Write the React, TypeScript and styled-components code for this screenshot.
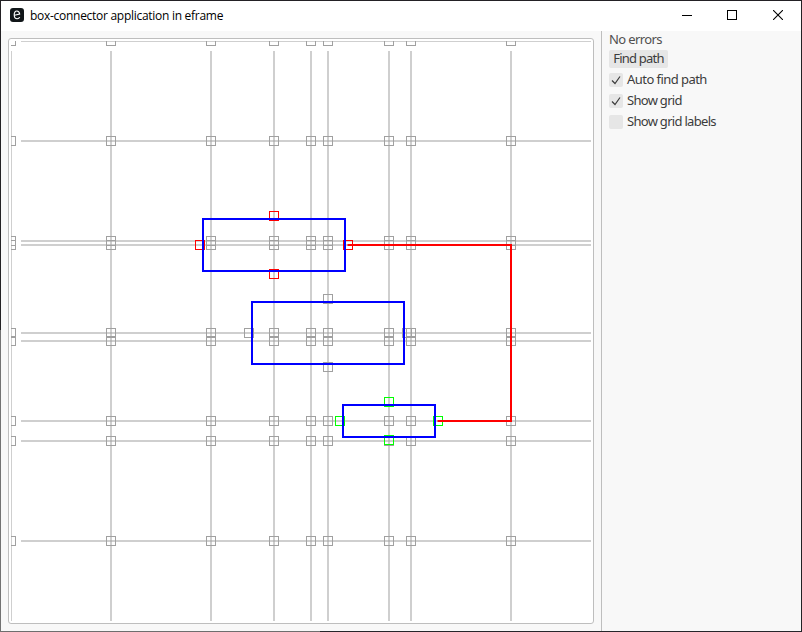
import React, { useState } from "react";
import styled, { createGlobalStyle } from "styled-components";

const GlobalStyle = createGlobalStyle`
  html, body, #root { height: 100%; margin: 0; }
  body { overflow: hidden; }
  *, *::before, *::after { box-sizing: border-box; }
`;

const WindowFrame = styled.div`
  width: 802px;
  height: 632px;
  padding: 1px;
  display: flex;
  flex-direction: column;
  background:
    linear-gradient(to bottom, #232124 330px, #727272 330px) 0 0 / 1px 100% no-repeat,
    linear-gradient(to right, #6e6e6e 320px, #26252a 320px) 0 100% / 100% 1px no-repeat,
    #232125;
`;

const TitleBar = styled.header`
  flex: none;
  height: 30px;
  display: flex;
  align-items: center;
  background: #fff;
  padding: 0 0 2px 9px;
`;

const Title = styled.h1`
  flex: 1;
  margin: 2px 0 0 6px;
  font: 400 12px/16px "Open Sans", sans-serif;
  letter-spacing: -0.28px;
  color: #000;
  white-space: nowrap;
`;

const Controls = styled.div`
  display: flex;
  height: 100%;
`;

const ControlButton = styled.button<{ $inset?: number }>`
  width: 46px;
  height: 100%;
  padding: 0 0 0 ${(p) => p.$inset ?? 0}px;
  border: 0;
  background: transparent;
  display: flex;
  align-items: center;
  justify-content: center;
`;

const Body = styled.div`
  flex: 1;
  min-height: 0;
  display: flex;
  background: #f8f8f8;
`;

const CentralPanel = styled.main`
  flex: none;
  width: 601px;
  border-right: 1px solid #bebebe;
  padding: 7px;
`;

const CanvasFrame = styled.div`
  width: 586px;
  height: 586px;
  padding: 2px;
  border: 1px solid #bebebe;
  border-radius: 3px;
  background: #fff;
  svg { display: block; }
`;

const SidePanel = styled.aside`
  flex: 1;
  padding: 0 7px;
  display: flex;
  flex-direction: column;
  align-items: flex-start;
  gap: 3px;
  font: 400 13px/16px "Noto Sans", sans-serif;
  color: #505050;
`;

const Status = styled.div`
  height: 16px;
  line-height: 17px;
  letter-spacing: -0.6px;
`;

const PathButton = styled.button`
  width: 59px;
  height: 18px;
  padding: 0 0 2px;
  border: 0;
  border-radius: 2px;
  background: #e6e6e6;
  color: #3c3c3c;
  font: inherit;
  letter-spacing: -0.8px;
`;

const CheckRow = styled.label<{ $spacing: number }>`
  height: 18px;
  display: flex;
  align-items: center;
  gap: 4px;
  color: #3c3c3c;
  letter-spacing: ${(p) => p.$spacing}px;
`;

const CheckLabel = styled.span`
  height: 18px;
`;

const CheckBox = styled.span`
  width: 14px;
  height: 14px;
  border-radius: 2px;
  background: #e6e6e6;
  svg { display: block; }
`;

const HiddenInput = styled.input`
  display: none;
`;

const ORIGIN = { x: 11, y: 41 };
const SIZE = 580;
const COLUMNS = [11, 111, 211, 274, 311, 328, 389, 411, 511];
const ROWS = [41, 141, 241, 245, 333, 341, 421, 441, 541];
const EXTENSION = 3;

type Box = { x1: number; y1: number; x2: number; y2: number; color: string };
const BOXES: Box[] = [
  { x1: 203, y1: 219, x2: 345, y2: 271, color: "#ff0000" },
  { x1: 252, y1: 302, x2: 404, y2: 364, color: "#a0a0a0" },
  { x1: 343, y1: 405, x2: 435, y2: 437, color: "#00ff00" },
];

function Marker({ x, y, color = "#a0a0a0" }: { x: number; y: number; color?: string }) {
  return <rect x={x - 4.5} y={y - 4.5} width={9} height={9} fill="none" stroke={color} />;
}

function Connectors({ box }: { box: Box }) {
  const cx = (box.x1 + box.x2) / 2;
  const cy = (box.y1 + box.y2) / 2;
  return (
    <>
      <Marker x={cx} y={box.y1 - EXTENSION} color={box.color} />
      <Marker x={cx} y={box.y2 + EXTENSION} color={box.color} />
      <Marker x={box.x1 - EXTENSION} y={cy} color={box.color} />
      <Marker x={box.x2 + EXTENSION} y={cy} color={box.color} />
    </>
  );
}

function Diagram({ showGrid }: { showGrid: boolean }) {
  return (
    <svg width={SIZE} height={SIZE} viewBox={`${ORIGIN.x} ${ORIGIN.y} ${SIZE} ${SIZE}`}>
      {showGrid && (
        <g>
          <g stroke="#a0a0a0" strokeOpacity={0.5} strokeWidth={2}>
            {COLUMNS.map((x) => <line key={x} x1={x} x2={x} y1={51} y2={621} />)}
            {ROWS.map((y) => <line key={y} x1={21} x2={591} y1={y} y2={y} />)}
          </g>
          {COLUMNS.map((x) => ROWS.map((y) => <Marker key={`${x}-${y}`} x={x} y={y} />))}
        </g>
      )}
      {BOXES.map((b) => <Connectors key={b.x1} box={b} />)}
      {BOXES.map((b) => (
        <rect key={b.x1} x={b.x1} y={b.y1} width={b.x2 - b.x1} height={b.y2 - b.y1} fill="none" stroke="#0000ff" strokeWidth={2} />
      ))}
      <path d="M347.5 245H511V421H437.5" fill="none" stroke="#ff0000" strokeWidth={2} />
    </svg>
  );
}

function AppIcon() {
  return (
    <svg width="14" height="14" viewBox="0 0 14 14">
      <rect width="14" height="14" rx="3" fill="#111619" />
      <path d="M4.4 7.3L9.7 6.1C9.4 4.2 8.4 3 6.9 3C5.1 3 4.1 4.6 4.2 6.9C4.3 9.2 5.4 10.7 7.2 10.7C8.3 10.7 9.2 10.2 9.8 9.3" fill="none" stroke="#fff" strokeWidth="1.1" />
    </svg>
  );
}

function Toggle({ label, spacing, checked, onChange }: { label: string; spacing: number; checked: boolean; onChange: (v: boolean) => void }) {
  return (
    <CheckRow $spacing={spacing}>
      <HiddenInput type="checkbox" checked={checked} onChange={(e) => onChange(e.target.checked)} />
      <CheckBox>
        {checked && (
          <svg width="14" height="14" viewBox="0 0 14 14">
            <path d="M3 7.5L6 10.5L11 3.5" fill="none" stroke="#3c3c3c" strokeWidth="1.2" />
          </svg>
        )}
      </CheckBox>
      <CheckLabel>{label}</CheckLabel>
    </CheckRow>
  );
}

export default function App() {
  const [auto, setAuto] = useState(true);
  const [grid, setGrid] = useState(true);
  const [labels, setLabels] = useState(false);
  return (
    <>
      <GlobalStyle />
      <WindowFrame>
        <TitleBar>
          <AppIcon />
          <Title>box-connector application in eframe</Title>
          <Controls>
            <ControlButton aria-label="Minimize" $inset={2}>
              <svg width="10" height="10" viewBox="0 0 10 10"><path d="M0 5.5H10" stroke="#000" /></svg>
            </ControlButton>
            <ControlButton aria-label="Maximize">
              <svg width="10" height="10" viewBox="0 0 10 10"><rect x=".5" y=".5" width="9" height="9" fill="none" stroke="#000" /></svg>
            </ControlButton>
            <ControlButton aria-label="Close">
              <svg width="10" height="10" viewBox="0 0 10 10"><path d="M0 0L10 10M10 0L0 10" stroke="#000" strokeWidth="1.1" /></svg>
            </ControlButton>
          </Controls>
        </TitleBar>
        <Body>
          <CentralPanel>
            <CanvasFrame>
              <Diagram showGrid={grid} />
            </CanvasFrame>
          </CentralPanel>
          <SidePanel>
            <Status>No errors</Status>
            <PathButton>Find path</PathButton>
            <Toggle label="Auto find path" spacing={-0.55} checked={auto} onChange={setAuto} />
            <Toggle label="Show grid" spacing={-0.7} checked={grid} onChange={setGrid} />
            <Toggle label="Show grid labels" spacing={-0.7} checked={labels} onChange={setLabels} />
          </SidePanel>
        </Body>
      </WindowFrame>
    </>
  );
}
